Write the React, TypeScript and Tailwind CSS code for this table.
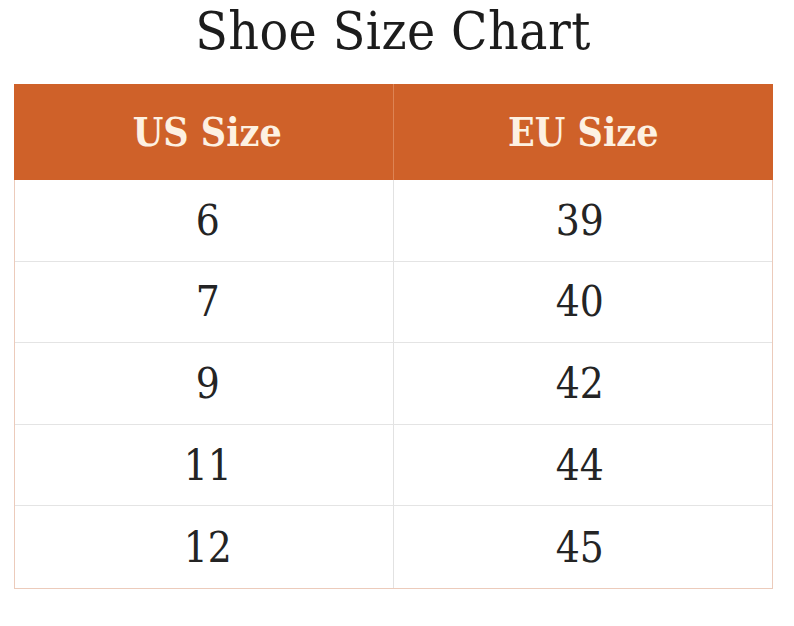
import React from "react";

const rows = [
  ["6", "39"],
  ["7", "40"],
  ["9", "42"],
  ["11", "44"],
  ["12", "45"],
];

export default function App() {
  return (
    <div className="w-[794px] h-[626px] bg-white font-['DejaVu_Serif_Condensed','DejaVu_Serif',serif] text-[#222]">
      <div className="h-[84px] flex items-start justify-center pr-[8px]">
        <h1 className="text-[53px] leading-[62px] text-[#1c1c1c] tracking-[0.4px]">Shoe Size Chart</h1>
      </div>
      <div className="ml-[14px] w-[759px]">
        <div className="grid grid-cols-2 h-[96px] bg-[#cf6129]">
          <div className="flex items-center justify-center border-r border-[#dd8454] text-[39px] font-bold text-[#fdf1e2] pl-[8px]">US Size</div>
          <div className="flex items-center justify-center text-[39px] font-bold text-[#fdf1e2]">EU Size</div>
        </div>
        <div className="border-x border-b border-[#eccbbb]">
          {rows.map(([us, eu], i) => (
            <div
              key={us}
              className={`grid grid-cols-2 h-[81.6px] ${i < rows.length - 1 ? "border-b border-[#e4e4e4]" : ""}`}
            >
              <div className="flex items-center justify-center border-r border-[#e2e2e2] text-[42px] text-[#242424] pl-[8px]">{us}</div>
              <div className="flex items-center justify-center text-[42px] text-[#242424] pr-[6px]">{eu}</div>
            </div>
          ))}
        </div>
      </div>
    </div>
  );
}
